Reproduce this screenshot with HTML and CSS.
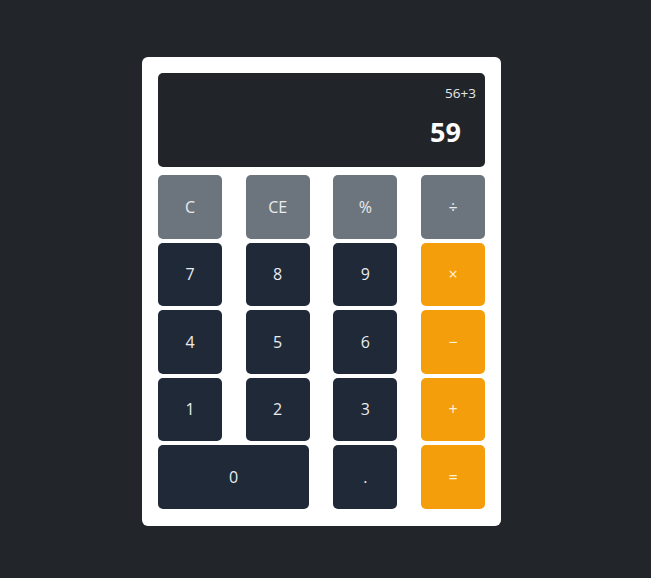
FILE: index.html
```html
<!DOCTYPE html>
<html>
<head>
<meta charset="utf-8">
<link rel="stylesheet" href="styles.css">
</head>
<body>
<div class="page">
  <div class="calc">
    <div class="display">
      <div class="expr">56+3</div>
      <div class="result">59</div>
    </div>
    <div class="keys">
      <button class="key gray">C</button>
      <button class="key gray">CE</button>
      <button class="key gray">%</button>
      <button class="key gray">÷</button>
      <button class="key dark">7</button>
      <button class="key dark">8</button>
      <button class="key dark">9</button>
      <button class="key orange">×</button>
      <button class="key dark">4</button>
      <button class="key dark">5</button>
      <button class="key dark">6</button>
      <button class="key orange">−</button>
      <button class="key dark">1</button>
      <button class="key dark">2</button>
      <button class="key dark">3</button>
      <button class="key orange">+</button>
      <button class="key dark zero">0</button>
      <button class="key dark">.</button>
      <button class="key orange">=</button>
    </div>
  </div>
</div>
</body>
</html>
```
FILE: styles.css
```css
html, body {
  margin: 0;
  padding: 0;
  background: #222529;
  font-family: "Open Sans", "Noto Sans", sans-serif;
}
.page {
  width: 651px;
  height: 578px;
  display: flex;
  justify-content: flex-start;
  padding: 57px 0 0 142px;
  box-sizing: border-box;
}
.calc {
  width: 359px;
  height: 469px;
  background: #ffffff;
  border-radius: 6px;
  padding: 16px;
  box-sizing: border-box;
}
.display {
  height: 94px;
  background: #212529;
  border-radius: 5px;
  color: #fff;
  text-align: right;
  padding: 10px 9px 0 0;
  box-sizing: border-box;
}
.expr {
  font-size: 13.5px;
  line-height: 20px;
  color: #e6e6e6;
}
.result {
  font-size: 27px;
  font-weight: 700;
  line-height: 36px;
  margin-top: 11px;
  margin-right: 15px;
}
.keys {
  margin-top: 8px;
  display: grid;
  grid-template-columns: repeat(4, 64px);
  grid-auto-rows: 63.5px;
  justify-content: space-between;
  row-gap: 4px;
}
.key {
  border: none;
  border-radius: 5px;
  font-family: inherit;
  font-size: 16px;
  color: #e9ecef;
  padding: 0;
  margin: 0;
}
.gray { background: #6c757d; }
.dark { background: #1f2937; }
.orange { background: #f59e0b; color: #fff3dc; }
.zero {
  grid-column: span 2;
  width: 151px;
}
```
